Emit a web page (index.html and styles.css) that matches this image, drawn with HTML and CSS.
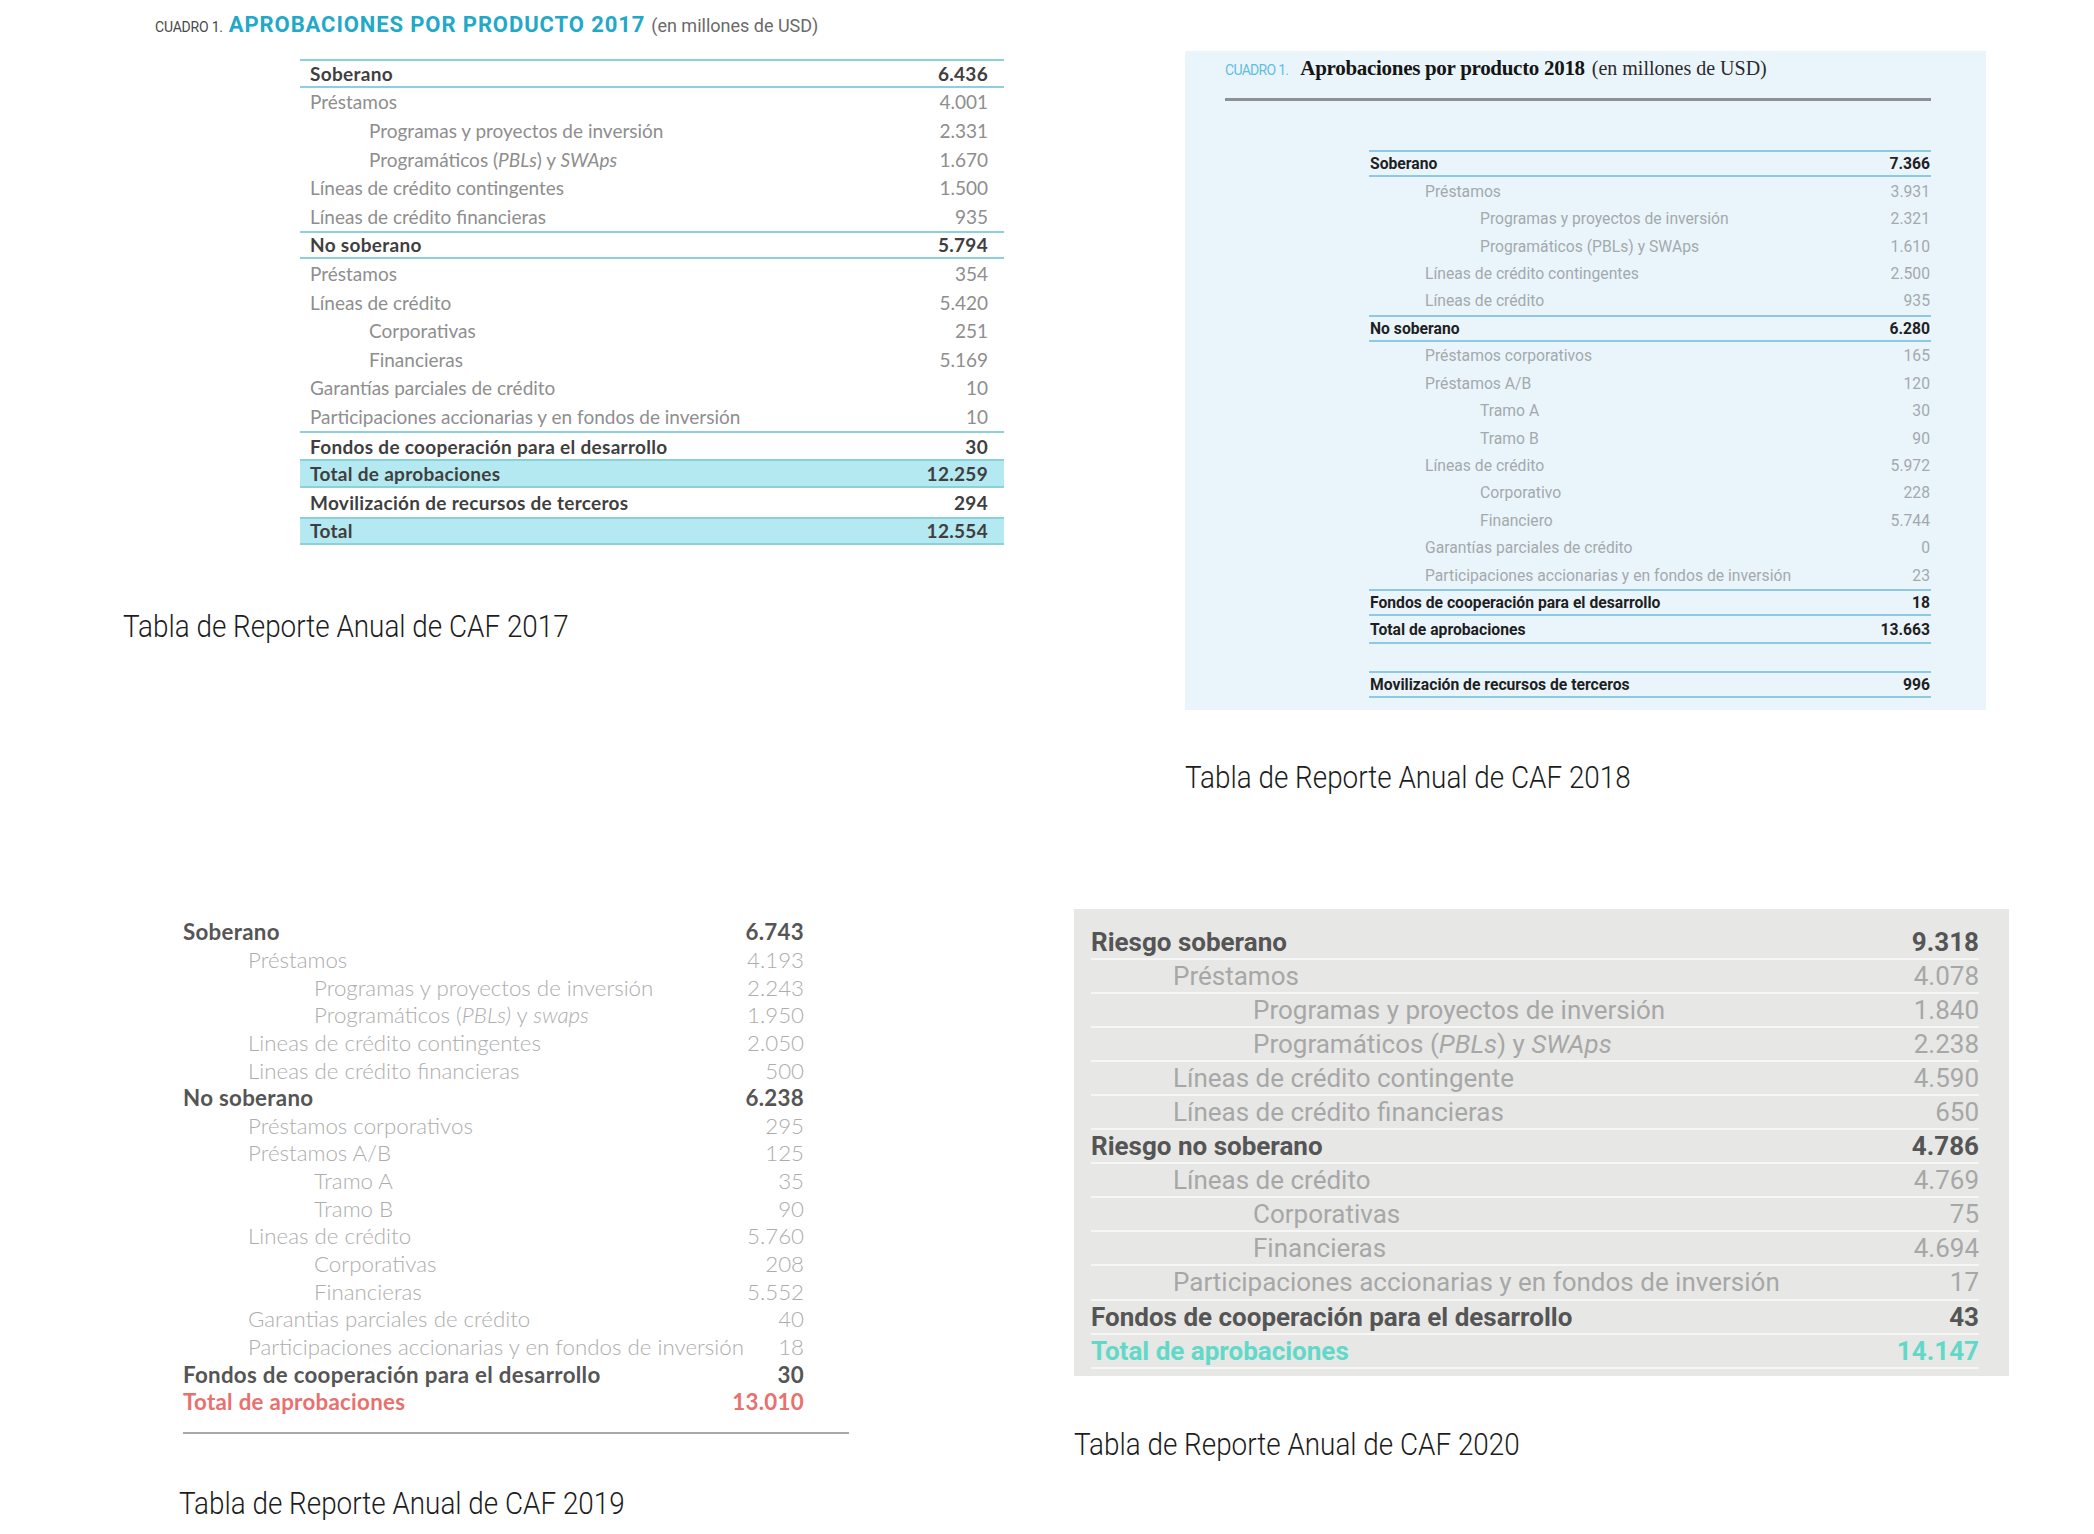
FILE: index.html
```html
<!DOCTYPE html>
<html lang="es">
<head>
  <meta charset="UTF-8">
  <meta name="viewport" content="width=device-width, initial-scale=1.0">
  <title>Reportes Anuales de CAF</title>
  <link rel="stylesheet" href="styles.css">
</head>
<body>
  <div class="page">
    <div class="row-top">
      <!-- 2017 -->
      <section class="cell-2017">
        <div class="t17-title">
          <span class="cuadro">CUADRO 1.</span>
          <span class="main">APROBACIONES POR PRODUCTO 2017</span>
          <span class="unit">(en millones de USD)</span>
        </div>
        <div class="t17">
          <div class="r b bt bb"><span>Soberano</span><span>6.436</span></div>
          <div class="r"><span>Préstamos</span><span>4.001</span></div>
          <div class="r i2"><span>Programas y proyectos de inversión</span><span>2.331</span></div>
          <div class="r i2"><span>Programáticos (<em>PBLs</em>) y <em>SWAps</em></span><span>1.670</span></div>
          <div class="r"><span>Líneas de crédito contingentes</span><span>1.500</span></div>
          <div class="r"><span>Líneas de crédito financieras</span><span>935</span></div>
          <div class="r b bt bb"><span>No soberano</span><span>5.794</span></div>
          <div class="r"><span>Préstamos</span><span>354</span></div>
          <div class="r"><span>Líneas de crédito</span><span>5.420</span></div>
          <div class="r i2"><span>Corporativas</span><span>251</span></div>
          <div class="r i2"><span>Financieras</span><span>5.169</span></div>
          <div class="r"><span>Garantías parciales de crédito</span><span>10</span></div>
          <div class="r"><span>Participaciones accionarias y en fondos de inversión</span><span>10</span></div>
          <div class="r b bt"><span>Fondos de cooperación para el desarrollo</span><span>30</span></div>
          <div class="r b bt bb hl"><span>Total de aprobaciones</span><span>12.259</span></div>
          <div class="r b"><span>Movilización de recursos de terceros</span><span>294</span></div>
          <div class="r b bt bb hl"><span>Total</span><span>12.554</span></div>
        </div>
        <p class="caption cap-2017">Tabla de Reporte Anual de CAF 2017</p>
      </section>

      <!-- 2018 -->
      <section class="cell-2018">
        <div class="panel-2018">
          <div class="t18-title">
            <span class="cuadro">CUADRO 1.</span>
            <span class="main">Aprobaciones por producto 2018</span>
            <span class="unit">(en millones de USD)</span>
          </div>
          <div class="t18-rule"></div>
          <div class="t18">
            <div class="r b bt bb"><span>Soberano</span><span>7.366</span></div>
            <div class="r i1"><span>Préstamos</span><span>3.931</span></div>
            <div class="r i2"><span>Programas y proyectos de inversión</span><span>2.321</span></div>
            <div class="r i2"><span>Programáticos (PBLs) y SWAps</span><span>1.610</span></div>
            <div class="r i1"><span>Líneas de crédito contingentes</span><span>2.500</span></div>
            <div class="r i1"><span>Líneas de crédito</span><span>935</span></div>
            <div class="r b bt bb"><span>No soberano</span><span>6.280</span></div>
            <div class="r i1"><span>Préstamos corporativos</span><span>165</span></div>
            <div class="r i1"><span>Préstamos A/B</span><span>120</span></div>
            <div class="r i2"><span>Tramo A</span><span>30</span></div>
            <div class="r i2"><span>Tramo B</span><span>90</span></div>
            <div class="r i1"><span>Líneas de crédito</span><span>5.972</span></div>
            <div class="r i2"><span>Corporativo</span><span>228</span></div>
            <div class="r i2"><span>Financiero</span><span>5.744</span></div>
            <div class="r i1"><span>Garantías parciales de crédito</span><span>0</span></div>
            <div class="r i1"><span>Participaciones accionarias y en fondos de inversión</span><span>23</span></div>
            <div class="r b bt bb"><span>Fondos de cooperación para el desarrollo</span><span>18</span></div>
            <div class="r b bb"><span>Total de aprobaciones</span><span>13.663</span></div>
            <div class="gap"></div>
            <div class="r b bt bb"><span>Movilización de recursos de terceros</span><span>996</span></div>
          </div>
        </div>
        <p class="caption cap-2018">Tabla de Reporte Anual de CAF 2018</p>
      </section>
    </div>

    <div class="row-bottom">
      <!-- 2019 -->
      <section class="cell-2019">
        <div class="t19">
          <div class="r b"><span>Soberano</span><span>6.743</span></div>
          <div class="r i1"><span>Préstamos</span><span>4.193</span></div>
          <div class="r i2"><span>Programas y proyectos de inversión</span><span>2.243</span></div>
          <div class="r i2"><span>Programáticos (<em>PBLs)</em> y <em>swaps</em></span><span>1.950</span></div>
          <div class="r i1"><span>Lineas de crédito contingentes</span><span>2.050</span></div>
          <div class="r i1"><span>Lineas de crédito financieras</span><span>500</span></div>
          <div class="r b"><span>No soberano</span><span>6.238</span></div>
          <div class="r i1"><span>Préstamos corporativos</span><span>295</span></div>
          <div class="r i1"><span>Préstamos A/B</span><span>125</span></div>
          <div class="r i2"><span>Tramo A</span><span>35</span></div>
          <div class="r i2"><span>Tramo B</span><span>90</span></div>
          <div class="r i1"><span>Lineas de crédito</span><span>5.760</span></div>
          <div class="r i2"><span>Corporativas</span><span>208</span></div>
          <div class="r i2"><span>Financieras</span><span>5.552</span></div>
          <div class="r i1"><span>Garantias parciales de crédito</span><span>40</span></div>
          <div class="r i1"><span>Participaciones accionarias y en fondos de inversión</span><span>18</span></div>
          <div class="r b"><span>Fondos de cooperación para el desarrollo</span><span>30</span></div>
          <div class="r b total"><span>Total de aprobaciones</span><span>13.010</span></div>
        </div>
        <div class="t19-rule"></div>
        <p class="caption cap-2019">Tabla de Reporte Anual de CAF 2019</p>
      </section>

      <!-- 2020 -->
      <section class="cell-2020">
        <div class="panel-2020">
          <div class="r b"><span>Riesgo soberano</span><span>9.318</span></div>
          <div class="r i1"><span>Préstamos</span><span>4.078</span></div>
          <div class="r i2"><span>Programas y proyectos de inversión</span><span>1.840</span></div>
          <div class="r i2"><span>Programáticos (<em>PBLs</em>) y <em>SWAps</em></span><span>2.238</span></div>
          <div class="r i1"><span>Líneas de crédito contingente</span><span>4.590</span></div>
          <div class="r i1"><span>Líneas de crédito financieras</span><span>650</span></div>
          <div class="r b"><span>Riesgo no soberano</span><span>4.786</span></div>
          <div class="r i1"><span>Líneas de crédito</span><span>4.769</span></div>
          <div class="r i2"><span>Corporativas</span><span>75</span></div>
          <div class="r i2"><span>Financieras</span><span>4.694</span></div>
          <div class="r i1"><span>Participaciones accionarias y en fondos de inversión</span><span>17</span></div>
          <div class="r b"><span>Fondos de cooperación para el desarrollo</span><span>43</span></div>
          <div class="r b total"><span>Total de aprobaciones</span><span>14.147</span></div>
        </div>
        <p class="caption cap-2020">Tabla de Reporte Anual de CAF 2020</p>
      </section>
    </div>
  </div>
</body>
</html>
```

FILE: styles.css
```css
/* Layout */
body {
  margin: 0;
  background: #fff;
  font-family: Roboto, "Liberation Sans", sans-serif;
  color: #222;
}

.page {
  width: 2094px;
}

.row-top {
  display: flex;
  height: 909px;
}

.row-bottom {
  display: flex;
}

.r {
  display: flex;
  justify-content: space-between;
  align-items: center;
  box-sizing: border-box;
  white-space: nowrap;
}

.caption {
  margin: 0;
  height: 40px;
  line-height: 40px;
  font-family: Roboto, sans-serif;
  font-weight: 300;
  font-size: 32px;
  color: #1c1c1c;
  transform: scaleX(0.87);
  transform-origin: left center;
  white-space: nowrap;
}

/* ---------- 2017 ---------- */
.cell-2017 {
  width: 937px;
  padding-left: 123px;
}

.t17-title {
  margin: 10px 0 0 32px;
  height: 30px;
  line-height: 30px;
  white-space: nowrap;
}

.t17-title .cuadro {
  font-family: Roboto, sans-serif;
  font-size: 14px;
  letter-spacing: -0.2px;
  color: #4a4a4a;
}

.t17-title .main {
  font-family: Roboto, sans-serif;
  font-weight: 700;
  font-size: 22px;
  letter-spacing: 0.9px;
  color: #22a9c8;
  margin-left: 2px;
}

.t17-title .unit {
  font-size: 18px;
  color: #6a6a6a;
  margin-left: 2px;
}

.t17 {
  margin: 19px 0 0 177px;
  width: 704px;
  font-family: Lato, sans-serif;
  font-size: 19px;
  color: #8e8e8e;
}

.t17 .r {
  height: 28.6px;
  padding: 0 16px 0 10px;
}

.t17 .i2 span:first-child {
  padding-left: 59px;
}

.t17 .b {
  font-weight: 700;
  color: #3f3f3f;
  letter-spacing: 0.3px;
}

.t17 .bt {
  border-top: 2px solid #8ad1dc;
}

.t17 .bb {
  border-bottom: 2px solid #8ad1dc;
}

.t17 .hl {
  background: #b4e9f1;
}

.cap-2017 {
  margin-top: 61px;
}

/* ---------- 2018 ---------- */
.cell-2018 {
  margin-left: 125px;
  padding-top: 51px;
}

.panel-2018 {
  width: 801px;
  height: 659px;
  box-sizing: border-box;
  padding: 2px 55px 0 40px;
  background: #eaf5fb;
}

.t18-title {
  height: 30px;
  line-height: 30px;
  white-space: nowrap;
}

.t18-title .cuadro {
  font-size: 14px;
  letter-spacing: -0.7px;
  color: #63bde2;
}

.t18-title .main {
  font-family: "Liberation Serif", serif;
  font-weight: 700;
  font-size: 21px;
  letter-spacing: -0.3px;
  color: #151515;
  margin-left: 8px;
}

.t18-title .unit {
  font-family: "Liberation Serif", serif;
  font-size: 20px;
  color: #2a2a2a;
  margin-left: 3px;
}

.t18-rule {
  margin-top: 15px;
  height: 3px;
  background: #8c9196;
}

.t18 {
  margin: 49px 0 0 144px;
  width: 562px;
  font-size: 15.7px;
  color: #a3a9ad;
}

.t18 .r {
  height: 27.45px;
  padding: 0 1px;
}

.t18 .i1 span:first-child {
  padding-left: 55px;
}

.t18 .i2 span:first-child {
  padding-left: 110px;
}

.t18 .b {
  font-weight: 700;
  color: #1f1f1f;
}

.t18 .bt {
  border-top: 2px solid #8cc9e3;
}

.t18 .bb {
  border-bottom: 2px solid #8cc9e3;
}

.t18 .gap {
  height: 27px;
}

.cap-2018 {
  margin-top: 47px;
}

/* ---------- 2019 ---------- */
.cell-2019 {
  width: 895px;
  padding-left: 179px;
  padding-top: 9px;
}

.t19 {
  margin-left: 4px;
  width: 621px;
  font-family: Lato, sans-serif;
  font-weight: 300;
  font-size: 22.3px;
  color: #adadad;
}

.t19 .r {
  height: 27.65px;
}

.t19 .i1 span:first-child {
  padding-left: 65px;
}

.t19 .i2 span:first-child {
  padding-left: 131px;
}

.t19 .b {
  font-weight: 700;
  color: #555;
  letter-spacing: 0.3px;
}

.t19 .total {
  color: #e8706d;
}

.t19-rule {
  margin: 16px 0 0 4px;
  width: 666px;
  height: 2px;
  background: #a9a9a9;
}

.cap-2019 {
  margin-top: 49px;
}

/* ---------- 2020 ---------- */
.panel-2020 {
  width: 935px;
  height: 467px;
  box-sizing: border-box;
  padding: 17px 30px 0 17px;
  background: #e7e7e6;
  font-size: 26px;
  color: #a7a7a7;
}

.panel-2020 .r {
  height: 34.05px;
  border-bottom: 2px solid #f6f6f6;
}

.panel-2020 .i1 span:first-child {
  padding-left: 82px;
}

.panel-2020 .i2 span:first-child {
  padding-left: 162px;
}

.panel-2020 .b {
  font-weight: 700;
  color: #555;
}

.panel-2020 .total {
  color: #62d9c8;
}

.cap-2020 {
  margin-top: 48px;
}
```
